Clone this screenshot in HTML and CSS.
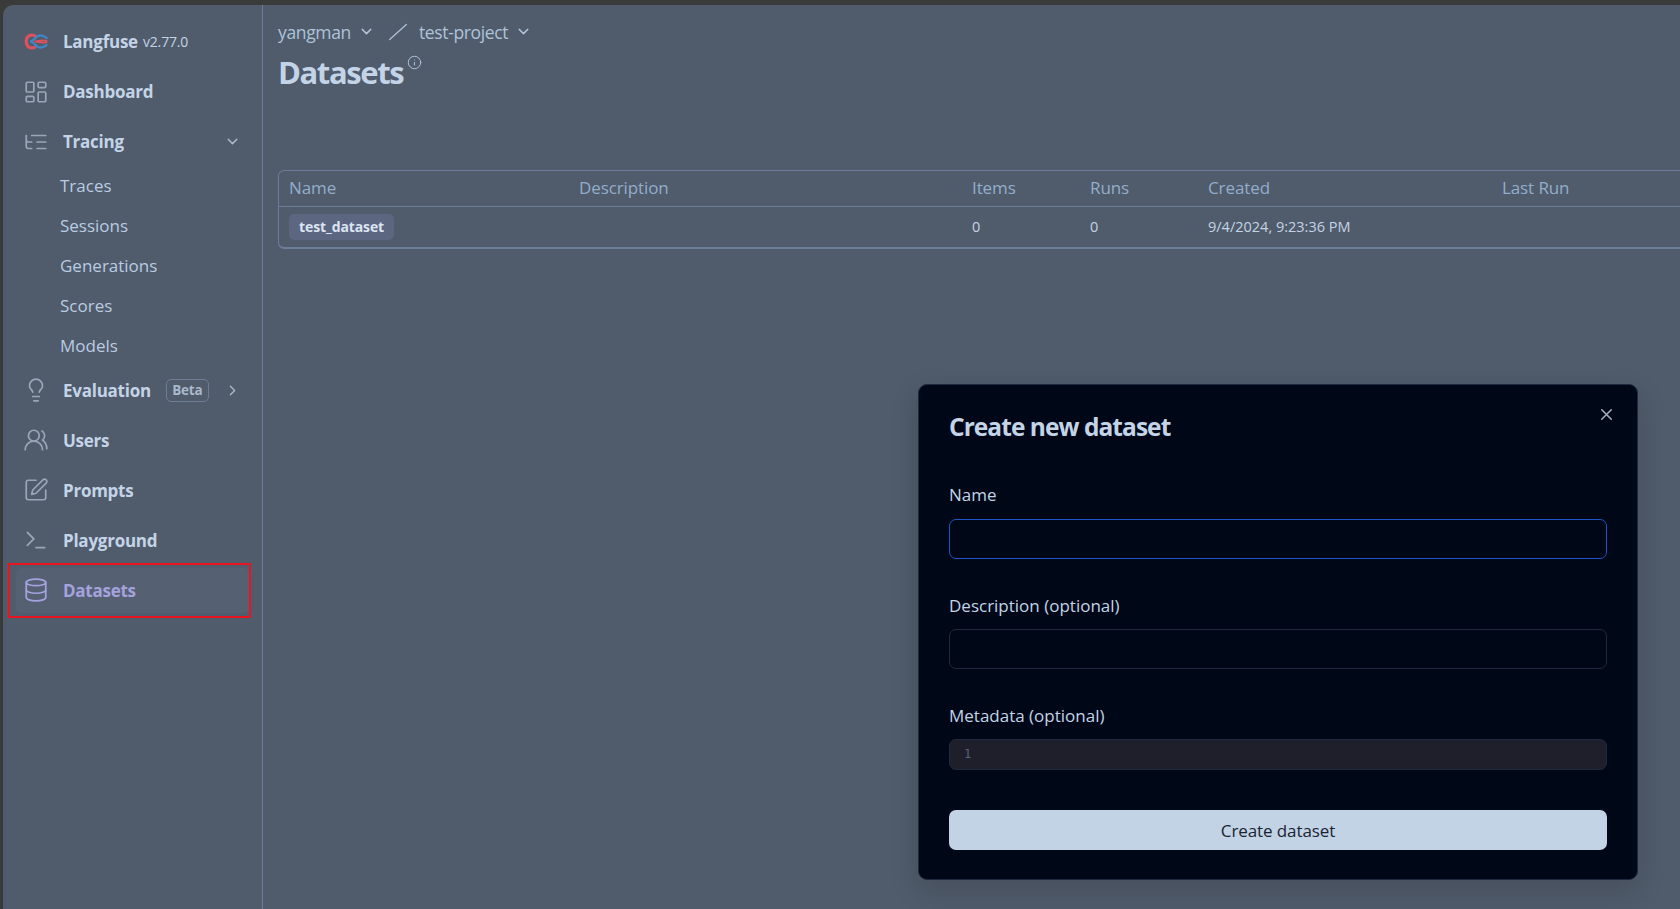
FILE: index.html
```html
<!DOCTYPE html>
<html lang="en">
<head>
<meta charset="utf-8">
<title>Datasets | Langfuse</title>
<link rel="stylesheet" href="styles.css">
</head>
<body>
<div class="app">
	<aside class="sidebar">
		<div class="nav_row brand">
			<svg class="logo" viewBox="0 0 28 20" fill="none" stroke-linecap="round">
				<path d="M13 4C8 1.5 3.500 4.500 3.500 10s4.500 8.500 9.500 6" stroke="#d9525e" stroke-width="3.400"/>
				<path d="M8.500 10c4-1 5.500-6.500 10-6.500 3 0 5 1 7 2.500" stroke="#3f86c9" stroke-width="2.400"/>
				<path d="M8.500 10c4 1 5.500 6.500 10 6.500 3 0 5-1 7-2.500" stroke="#3f86c9" stroke-width="2.400"/>
				<path d="M13 10c3-.5 6-2 12.500-1M13 10c3 .5 6 2 12.500 1" stroke="#d9525e" stroke-width="1.800"/>
			</svg>
			<span class="nav_text">Langfuse</span><span class="version">v2.77.0</span>
		</div>
		<div class="nav_row">
			<svg class="icon" viewBox="0 0 24 24"><rect width="7" height="9" x="3" y="3" rx="1"/><rect width="7" height="5" x="14" y="3" rx="1"/><rect width="7" height="9" x="14" y="12" rx="1"/><rect width="7" height="5" x="3" y="16" rx="1"/></svg>
			<span class="nav_text">Dashboard</span>
		</div>
		<div class="nav_row">
			<svg class="icon" viewBox="0 0 24 24"><path d="M21 12h-8M21 6H8M21 18h-8M3 6v4c0 1.1.9 2 2 2h3M3 10v6c0 1.1.9 2 2 2h3"/></svg>
			<span class="nav_text">Tracing</span>
			<svg class="chevron" viewBox="0 0 24 24"><path d="m6 9 6 6 6-6"/></svg>
		</div>
		<ul class="sub_nav">
			<li>Traces</li>
			<li>Sessions</li>
			<li>Generations</li>
			<li>Scores</li>
			<li>Models</li>
		</ul>
		<div class="nav_row">
			<svg class="icon" viewBox="0 0 24 24"><path d="M15 14c.2-1 .7-1.700 1.500-2.500 1-.9 1.500-2.200 1.500-3.500A6 6 0 0 0 6 8c0 1 .2 2.200 1.500 3.500.7.7 1.300 1.500 1.500 2.500M9 18h6M10 22h4"/></svg>
			<span class="nav_text">Evaluation</span>
			<span class="beta">Beta</span>
			<svg class="chevron" viewBox="0 0 24 24"><path d="m9 18 6-6-6-6"/></svg>
		</div>
		<div class="nav_row">
			<svg class="icon" viewBox="0 0 24 24"><path d="M18 21a8 8 0 0 0-16 0"/><circle cx="10" cy="8" r="5"/><path d="M22 20c0-3.370-2-6.500-4-8a5 5 0 0 0-.45-8.300"/></svg>
			<span class="nav_text">Users</span>
		</div>
		<div class="nav_row">
			<svg class="icon" viewBox="0 0 24 24"><path d="M12 3H5a2 2 0 0 0-2 2v14a2 2 0 0 0 2 2h14a2 2 0 0 0 2-2v-7"/><path d="M18.375 2.625a2.121 2.121 0 1 1 3 3L12 15l-4 1 1-4Z"/></svg>
			<span class="nav_text">Prompts</span>
		</div>
		<div class="nav_row">
			<svg class="icon" viewBox="0 0 24 24"><path d="m4 17 6-6-6-6M12 19h8"/></svg>
			<span class="nav_text">Playground</span>
		</div>
		<div class="nav_row active">
			<svg class="icon" viewBox="0 0 24 24"><ellipse cx="12" cy="5" rx="9" ry="3"/><path d="M3 5v14a9 3 0 0 0 18 0V5"/><path d="M3 12a9 3 0 0 0 18 0"/></svg>
			<span class="nav_text">Datasets</span>
		</div>
	</aside>

	<main class="content">
		<div class="crumbs">
			<span>yangman</span>
			<svg class="crumb_chev" viewBox="0 0 24 24"><path d="m6 9 6 6 6-6"/></svg>
			<svg class="slash" viewBox="0 0 24 24"><path d="M22 3 2 21"/></svg>
			<span>test-project</span>
			<svg class="crumb_chev" viewBox="0 0 24 24"><path d="m6 9 6 6 6-6"/></svg>
		</div>
		<div class="page_title">
			<h1>Datasets</h1>
			<svg class="info" viewBox="0 0 24 24"><circle cx="12" cy="12" r="10"/><path d="M12 16v-4M12 8h.01"/></svg>
		</div>
		<div class="table_box">
			<table>
				<colgroup>
					<col class="col_name"><col class="col_desc"><col class="col_num"><col class="col_num"><col class="col_created"><col class="col_last">
				</colgroup>
				<thead>
					<tr><th>Name</th><th>Description</th><th>Items</th><th>Runs</th><th>Created</th><th>Last Run</th></tr>
				</thead>
				<tbody>
					<tr><td><span class="badge">test_dataset</span></td><td></td><td>0</td><td>0</td><td>9/4/2024, 9:23:36 PM</td><td></td></tr>
				</tbody>
			</table>
		</div>
	</main>
</div>

<div class="highlight"></div>

<form class="dialog">
	<svg class="close" viewBox="0 0 24 24"><path d="M18 6 6 18M6 6l12 12"/></svg>
	<h2>Create new dataset</h2>
	<label class="field_label first">Name</label>
	<input class="field focused" type="text">
	<label class="field_label">Description (optional)</label>
	<input class="field" type="text">
	<label class="field_label">Metadata (optional)</label>
	<div class="editor"><span>1</span></div>
	<button type="button" class="submit">Create dataset</button>
</form>
</body>
</html>
```

FILE: styles.css
```css
*{ margin:0; padding:0; box-sizing:border-box;}
html,body{ height:100%; overflow:hidden;}
body{ background:#3a3a3a; padding:5px 0 0 3px; font-family:"Open Sans","Noto Sans","Liberation Sans",sans-serif; color:#c3d4e8;}

.app{ display:flex; height:100%; background:#505b6b; border-top-left-radius:10px; overflow:hidden;}

/* sidebar */
.sidebar{ width:260px; flex:none; border-right:1px solid #6b7d99; padding:14px 12px 0 9px;}
.nav_row{ display:flex; align-items:center; height:45px; margin-bottom:5px; padding-left:11px; border-radius:6px;}
.icon{ width:26px; height:26px; flex:none; fill:none; stroke:#9aa6b7; stroke-width:1.6; stroke-linecap:round; stroke-linejoin:round;}
.logo{ width:26px; height:19px; flex:none;}
.nav_text{ margin-left:14px; font-size:17px; font-weight:700; letter-spacing:-0.25px; color:#c3d4e8;}
.version{ margin-left:5px; font-size:14px; letter-spacing:-0.15px; color:#c3d4e8;}
.chevron{ width:17px; height:17px; margin-left:auto; margin-right:9px; fill:none; stroke:#aab6c6; stroke-width:2; stroke-linecap:round; stroke-linejoin:round;}
.beta{ margin-left:15px; width:43px; height:23px; border:1px solid #6d7d96; border-radius:5px; font-size:13.5px; font-weight:700; letter-spacing:-0.2px; line-height:21px; text-align:center; color:#a9b8cb;}
.beta + .chevron{ margin-left:15px; margin-right:0;}
.sub_nav{ list-style:none; margin:-3px 0 1.5px; padding-left:48px;}
.sub_nav li{ height:40px; line-height:40px; font-size:17px; letter-spacing:0; color:#b9cce2;}
.nav_row.active{ margin-left:4px; padding-left:7px; background:#566073;}
.nav_row.active .icon{ stroke:#a5a3de;}
.nav_row.active .nav_text{ color:#a5a3de;}

/* main */
.content{ flex:1; min-width:0; overflow:hidden; padding:13px 0 0 15px;}
.crumbs{ display:flex; align-items:center; height:27px; font-size:17.5px; letter-spacing:-0.35px; color:#aec3da;}
.crumb_chev{ width:17px; height:17px; margin-left:7px; fill:none; stroke:#aec3da; stroke-width:2; stroke-linecap:round; stroke-linejoin:round;}
.slash{ width:20px; height:20px; margin:0 11px 0 13px; fill:none; stroke:#aec3da; stroke-width:1.5; stroke-linecap:round;}
.page_title{ display:flex; align-items:flex-start; margin-top:6px; height:43px;}
.page_title h1{ font-size:31px; line-height:43px; font-weight:700; letter-spacing:-1.4px; color:#c3d4e8;}
.info{ width:15px; height:15px; margin:4px 0 0 4px; fill:none; stroke:#aec3da; stroke-width:1.6; stroke-linecap:round;}

.table_box{ width:1500px; margin-top:76px; border:1px solid #6b7d99; border-bottom-width:2px; border-radius:6px;}
table{ width:100%; table-layout:fixed; border-collapse:collapse;}
.col_name{ width:290px;}
.col_desc{ width:393px;}
.col_num{ width:118px;}
.col_created{ width:294px;}
th{ height:35px; padding:0 0 2px 10px; border-bottom:1px solid #6b7d99; text-align:left; font-size:17px; font-weight:400; letter-spacing:-0.1px; color:#93aecb;}
td{ height:41px; padding-left:10px; font-size:14.5px; letter-spacing:0; color:#c3d4e8;}
.badge{ display:inline-block; height:26px; line-height:25px; padding:0 10px; border-radius:5px; background:#5d6681; font-weight:700; font-size:14px; letter-spacing:-0.1px; color:#dbe5f2;}

/* red box on the active item */
.highlight{ position:absolute; left:8px; top:563px; width:243px; height:55px; border:2.5px solid #e8141f; pointer-events:none;}

/* dialog */
.dialog{ position:absolute; left:918px; top:384px; width:720px; height:496px; padding:24px 30px 0 30px; background:#000716; border:1px solid #1e2a40; border-radius:9px; box-shadow:0 10px 30px rgba(0,0,0,.14);}
.dialog h2{ height:36px; line-height:36px; font-size:24.5px; font-weight:700; letter-spacing:-0.95px; color:#c3d4e8;}
.close{ position:absolute; right:21px; top:20px; width:19px; height:19px; fill:none; stroke:#a3adb9; stroke-width:2; stroke-linecap:round;}
.field_label{ display:block; height:27px; line-height:27px; font-size:17px; letter-spacing:0; color:#c3d4e8;}
.field_label.first{ margin-top:36px;}
.field{ display:block; width:658px; height:40px; margin:10.500px 0 33px; background:transparent; border:1px solid #1e2a40; border-radius:7px; outline:none;}
.field.focused{ border-color:#1d55c8;}
.editor{ width:658px; height:31px; margin-top:10px; padding-left:14px; background:#1e1f2b; border:1px solid #1e2a40; border-radius:7px; font-family:"DejaVu Sans Mono","Liberation Mono",monospace; font-size:12px; line-height:29px; color:#5b5f80;}
.submit{ display:block; width:658px; height:40px; margin-top:40px; background:#c2d3e6; border:none; border-radius:7px; font-family:inherit; font-size:17px; letter-spacing:-0.1px; color:#1b2333;}
```
